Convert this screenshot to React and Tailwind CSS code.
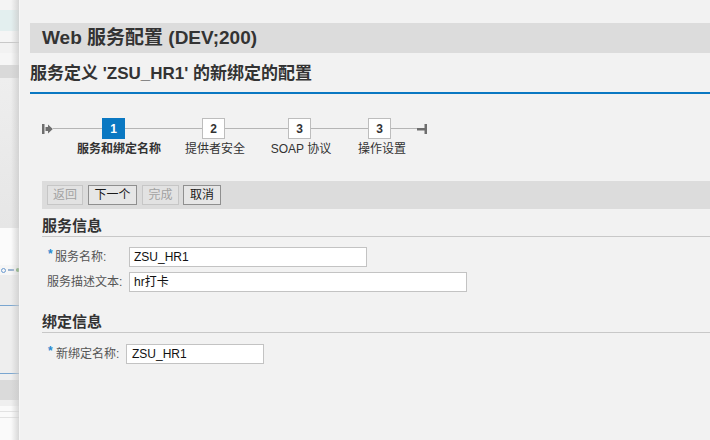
import React from "react";

const font = { fontFamily: '"Liberation Sans", "Noto Sans CJK SC", Arial, sans-serif' };

function StartIcon() {
  return (
    <svg width="11" height="10" viewBox="0 0 11 10" className="block">
      <rect x="0" y="0" width="2.5" height="10" fill="#6e6e6e" />
      <path d="M3.5 3 H6 V0.5 L10.8 5 L6 9.5 V7 H3.5 Z" fill="#6e6e6e" />
    </svg>
  );
}

function EndIcon() {
  return (
    <svg width="10" height="10" viewBox="0 0 10 10" className="block">
      <rect x="0" y="4" width="8" height="2.5" fill="#6e6e6e" />
      <rect x="7.5" y="0" width="2.5" height="10" fill="#6e6e6e" />
    </svg>
  );
}

function StepBox({ n, active }) {
  return (
    <div
      className={
        "w-[23px] h-[21px] flex items-center justify-center text-[12px] font-bold shrink-0 " +
        (active ? "bg-[#0a78c2] text-white" : "bg-white border border-[#bdbdbd] text-[#333]")
      }
    >
      {n}
    </div>
  );
}

function Line({ w }) {
  return <div className="h-px bg-[#b5b5b5] shrink-0" style={{ width: w }} />;
}

function Btn({ children, w, disabled }) {
  return (
    <div
      className={
        "h-[20px] flex items-center justify-center text-[12px] border " +
        (disabled
          ? "border-[#c6c6c6] text-[#a3a3a3] bg-[#e2e2e2]"
          : "border-[#8f8f8f] text-[#1a1a1a] bg-[#e6e6e6]")
      }
      style={{ width: w }}
    >
      {children}
    </div>
  );
}

export default function App() {
  return (
    <div className="w-[710px] h-[440px] flex bg-[#f2f2f2] overflow-hidden" style={font}>
      {/* blurred background app strip */}
      <div className="relative w-[20px] shrink-0 flex flex-col bg-[#eaeaea]">
        <div className="h-[10px] bg-[#f4f4f4]" />
        <div className="h-[21px] bg-[#e3efef]" />
        <div className="h-[11px] bg-[#f5f5f5]" />
        <div className="h-px bg-[#c8c8c8]" />
        <div className="h-[10px] bg-[#f2f2f2]" />
        <div className="h-[12px] bg-[#f6f6f6]" />
        <div className="h-[13px] bg-[#d9d9d9]" />
        <div className="h-[150px] bg-gradient-to-b from-[#eeeeee] to-[#e6e6e6]" />
        <div className="h-[37px] bg-[#fbfbfb]" />
        <div className="h-[10px] bg-[#f6f6f6] flex items-center gap-[2px] pl-[1px]">
          <div className="w-[5px] h-[5px] rounded-full border border-[#6a9ad0]" />
          <div className="w-[6px] h-[2px] bg-[#9ab3d0]" />
          <div className="w-[4px] h-[4px] rounded-full bg-[#5a9a4a]" />
        </div>
        <div className="h-[30px] bg-[#ececec]" />
        <div className="h-px bg-[#7aa6d0]" />
        <div className="h-[67px] bg-[#eeeeee]" />
        <div className="h-px bg-[#7aa6d0]" />
        <div className="h-[6px] bg-[#efefef]" />
        <div className="h-[20px] bg-[#dadada]" />
        <div className="h-[6px] bg-[#efefef]" />
        <div className="h-[6px] bg-[#fafafa] border-b border-[#e2e2e2]" />
        <div className="h-[6px] bg-[#fafafa] border-b border-[#e2e2e2]" />
        <div className="flex-1 bg-[#fafafa]" />
        <div className="absolute inset-y-0 right-[1px] w-[8px] bg-gradient-to-r from-transparent to-[#c9c9c9] opacity-70" />
        <div className="absolute inset-y-0 right-0 w-px bg-[#f7f7f7]" />
      </div>

      {/* main panel */}
      <div className="flex-1 flex flex-col pt-[23px] text-[#333]">
        <div className="ml-[10px] h-[30px] bg-[#dcdcdc] pl-[12px] flex items-center text-[19px] font-bold text-[#333]">
          Web 服务配置 (DEV;200)
        </div>
        <div className="ml-[10px] h-[39px] pt-[11px] text-[17px] leading-[20px] font-bold text-[#333]">
          服务定义 'ZSU_HR1' 的新绑定的配置
        </div>
        <div className="ml-[10px] h-[2px] bg-[#0a78c2]" />

        {/* stepper */}
        <div className="ml-[22px] mt-[24px] flex items-center h-[21px]">
          <StartIcon />
          <Line w={49} />
          <StepBox n="1" active />
          <Line w={77} />
          <StepBox n="2" />
          <Line w={63} />
          <StepBox n="3" />
          <Line w={57} />
          <StepBox n="3" />
          <Line w={26} />
          <EndIcon />
        </div>
        <div className="ml-[22px] mt-[2px] flex h-[16px] text-[12px] leading-[16px] text-[#333]">
          <div className="ml-[35px] w-[80px] text-center font-bold whitespace-nowrap">服务和绑定名称</div>
          <div className="ml-[18px] w-[80px] text-center whitespace-nowrap">提供者安全</div>
          <div className="ml-[6px] w-[80px] text-center whitespace-nowrap">SOAP 协议</div>
          <div className="ml-[1px] w-[80px] text-center whitespace-nowrap">操作设置</div>
        </div>

        {/* toolbar */}
        <div className="ml-[22px] mt-[24px] h-[28px] bg-[#dcdcdc] flex items-center pl-[5px] gap-[5px]">
          <Btn w={36} disabled>返回</Btn>
          <Btn w={49}>下一个</Btn>
          <Btn w={37} disabled>完成</Btn>
          <div className="-ml-px">
            <Btn w={38}>取消</Btn>
          </div>
        </div>

        {/* section 1 */}
        <div className="ml-[22px] h-[28px] border-b border-[#c8c8c8] flex items-end pb-[1px]">
          <span className="text-[15px] leading-[18px] font-bold text-[#333]">服务信息</span>
        </div>
        <div className="ml-[22px] mt-[10px] flex items-center h-[20px] text-[12px]">
          <span className="ml-[6px] w-[7px] text-[#2a8ad0] font-bold self-start leading-[14px]">*</span>
          <span className="w-[74px] text-[#555]">服务名称:</span>
          <div className="w-[238px] h-[20px] bg-white border border-[#c3c3c3] flex items-center pl-[4px] text-[#111]">
            ZSU_HR1
          </div>
        </div>
        <div className="ml-[22px] mt-[5px] flex items-center h-[20px] text-[12px]">
          <span className="ml-[5px] w-[82px] text-[#555]">服务描述文本:</span>
          <div className="w-[338px] h-[20px] bg-white border border-[#c3c3c3] flex items-center pl-[4px] text-[#111]">
            hr打卡
          </div>
        </div>

        {/* section 2 */}
        <div className="ml-[22px] h-[41px] border-b border-[#c8c8c8] flex items-end pb-[1px]">
          <span className="text-[15px] leading-[18px] font-bold text-[#333]">绑定信息</span>
        </div>
        <div className="ml-[22px] mt-[11px] flex items-center h-[20px] text-[12px]">
          <span className="ml-[6px] w-[8px] text-[#2a8ad0] font-bold self-start leading-[14px]">*</span>
          <span className="w-[70px] text-[#555]">新绑定名称:</span>
          <div className="w-[138px] h-[20px] bg-white border border-[#c3c3c3] flex items-center pl-[5px] text-[#111]">
            ZSU_HR1
          </div>
        </div>
      </div>
    </div>
  );
}
